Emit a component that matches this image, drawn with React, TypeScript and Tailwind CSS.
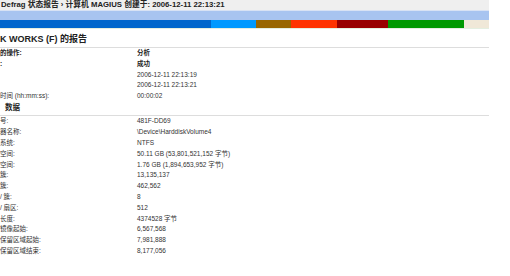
import React from 'react';

const font = { fontFamily: '"Liberation Sans", "Noto Sans CJK SC", sans-serif' };

const segments = [
  { w: 'w-[211px]', c: 'bg-[#0066cc]' },
  { w: 'w-[45px]', c: 'bg-[#0099ff]' },
  { w: 'w-[35px]', c: 'bg-[#996600]' },
  { w: 'w-[46px]', c: 'bg-[#ff3300]' },
  { w: 'w-[51px]', c: 'bg-[#990000]' },
  { w: 'w-[76px]', c: 'bg-[#009900]' },
  { w: 'w-[25px]', c: 'bg-[#f0e8d8]' },
];

const summary: [string, string, boolean][] = [
  ['的操作:', '分析', true],
  [':', '成功', true],
  ['', '2006-12-11 22:13:19', false],
  ['', '2006-12-11 22:13:21', false],
  ['时间 (hh:mm:ss):', '00:00:02', false],
];

const volume: [string, string][] = [
  ['号:', '481F-DD69'],
  ['器名称:', '\\Device\\HarddiskVolume4'],
  ['系统:', 'NTFS'],
  ['空间:', '50.11 GB (53,801,521,152 字节)'],
  ['空间:', '1.76 GB (1,894,653,952 字节)'],
  ['簇:', '13,135,137'],
  ['簇:', '462,562'],
  ['/ 簇:', '8'],
  ['/ 扇区:', '512'],
  ['长度:', '4374528 字节'],
  ['镜像起始:', '6,567,568'],
  ['保留区域起始:', '7,981,888'],
  ['保留区域结束:', '8,177,056'],
];

export default function App() {
  return (
    <div className="w-[510px] h-[276px] bg-white overflow-hidden text-[#333]" style={font}>
      <div className="w-[489px]">
        {/* title strip */}
        <div className="h-[10px] bg-[#efefef] flex items-center pl-[1px] text-[7.75px] font-bold text-[#222] leading-none whitespace-nowrap">
          Defrag 状态报告 › 计算机 MAGIUS 创建于: 2006-12-11 22:13:21
        </div>
        <div className="h-[10px] bg-[#a8c4f0] border-t border-[#d8e2f4]" />
        <div className="h-[8px] flex">
          {segments.map((s, i) => (
            <div key={i} className={`${s.w} ${s.c} h-full`} />
          ))}
        </div>
        <div className="h-[1px] bg-[#e4eee0]" />

        {/* volume heading */}
        <div className="h-[19px] flex items-end pb-[3px] border-b border-[#dddddd] text-[9px] font-bold text-[#222] leading-none whitespace-nowrap">
          K WORKS (F) 的报告
        </div>

        <div className="text-[6.5px] whitespace-nowrap">
          {summary.map(([l, v, b], i) => (
            <div key={i} className={`flex h-[10.6px] items-center ${b ? 'font-bold text-[#222]' : ''}`}>
              <div className="w-[137px]">{l}</div>
              <div>{v}</div>
            </div>
          ))}
        </div>

        <div className="h-[15px] flex items-end pb-[3px] pl-[5px] border-b border-[#dddddd] text-[7.5px] font-bold text-[#222] leading-none">
          数据
        </div>

        <div className="text-[6.5px] whitespace-nowrap">
          {volume.map(([l, v], i) => (
            <div key={i} className="flex h-[10.8px] items-center">
              <div className="w-[137px]">{l}</div>
              <div>{v}</div>
            </div>
          ))}
        </div>
      </div>
    </div>
  );
}
